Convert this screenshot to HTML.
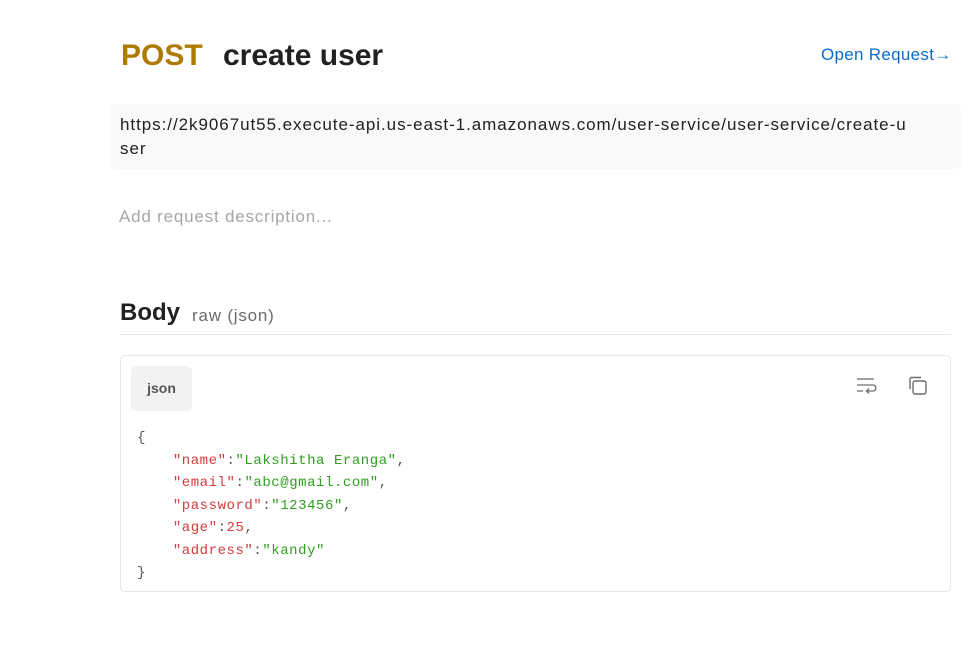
<!DOCTYPE html>
<html><head><meta charset="utf-8"><style>
body{margin:0;background:#fff;font-family:"Liberation Sans",sans-serif;width:979px;height:645px;overflow:hidden;position:relative;color:#212121}
.a{position:absolute;white-space:nowrap}
.code{font-family:"Liberation Mono",monospace;font-size:14px;line-height:22.5px;letter-spacing:0.55px}
.k{color:#d73a3a}.s{color:#2f9e1f}.p{color:#555}
</style></head><body>
<div class="a" style="left:121px;top:39px;font-size:30px;font-weight:bold;color:#ad7a03">POST</div>
<div class="a" style="left:223px;top:39px;font-size:30px;font-weight:bold;color:#212121">create user</div>
<div class="a" style="left:821px;top:45px;font-size:17px;color:#0b6bcb;letter-spacing:0.3px">Open Request→</div>
<div class="a" style="left:110px;top:104px;width:851px;height:65px;background:#f9f9f9;border-radius:5px"></div>
<div class="a" style="left:120px;top:113px;font-size:17px;line-height:24px;letter-spacing:0.95px">https://2k9067ut55.execute-api.us-east-1.amazonaws.com/user-service/user-service/create-u<br>ser</div>
<div class="a" style="left:119px;top:207px;font-size:17px;color:#a6a6a6;letter-spacing:0.8px">Add request description...</div>
<div class="a" style="left:120px;top:299px;font-size:24px;font-weight:bold">Body</div>
<div class="a" style="left:192px;top:306px;font-size:17px;color:#6b6b6b;letter-spacing:0.8px">raw (json)</div>
<div class="a" style="left:120px;top:334px;width:831px;height:1px;background:#e6e6e6"></div>
<div class="a" style="left:120px;top:355px;width:829px;height:235px;border:1px solid #e6e6e6;border-radius:5px"></div>
<div class="a" style="left:131px;top:366px;width:61px;height:45px;background:#f2f2f2;border-radius:5px;font-size:14px;font-weight:bold;color:#555;text-align:center;line-height:45px">json</div>
<svg class="a" style="left:855px;top:376px" width="22" height="20" viewBox="0 0 22 20" fill="none" stroke="#6b6b6b" stroke-width="1.3"><path d="M2 3h17M2 9h16a3 3 0 0 1 0 6h-6M14 12.5l-2.5 2.5 2.5 2.5M2 15h6"/></svg>
<svg class="a" style="left:907px;top:375px" width="22" height="22" viewBox="0 0 22 22" fill="none" stroke="#6b6b6b" stroke-width="1.4"><rect x="6" y="6" width="13" height="13" rx="2"/><path d="M3 14V4a1.5 1.5 0 0 1 1.5-1.5H14"/></svg>
<div class="a code" style="left:137px;top:427px"><span class="p">{</span><br>&nbsp;&nbsp;&nbsp;&nbsp;<span class="k">"name"</span><span class="p">:</span><span class="s">"Lakshitha Eranga"</span><span class="p">,</span><br>&nbsp;&nbsp;&nbsp;&nbsp;<span class="k">"email"</span><span class="p">:</span><span class="s">"abc@gmail.com"</span><span class="p">,</span><br>&nbsp;&nbsp;&nbsp;&nbsp;<span class="k">"password"</span><span class="p">:</span><span class="s">"123456"</span><span class="p">,</span><br>&nbsp;&nbsp;&nbsp;&nbsp;<span class="k">"age"</span><span class="p">:</span><span class="k">25</span><span class="p">,</span><br>&nbsp;&nbsp;&nbsp;&nbsp;<span class="k">"address"</span><span class="p">:</span><span class="s">"kandy"</span><br><span class="p">}</span></div>
</body></html>
